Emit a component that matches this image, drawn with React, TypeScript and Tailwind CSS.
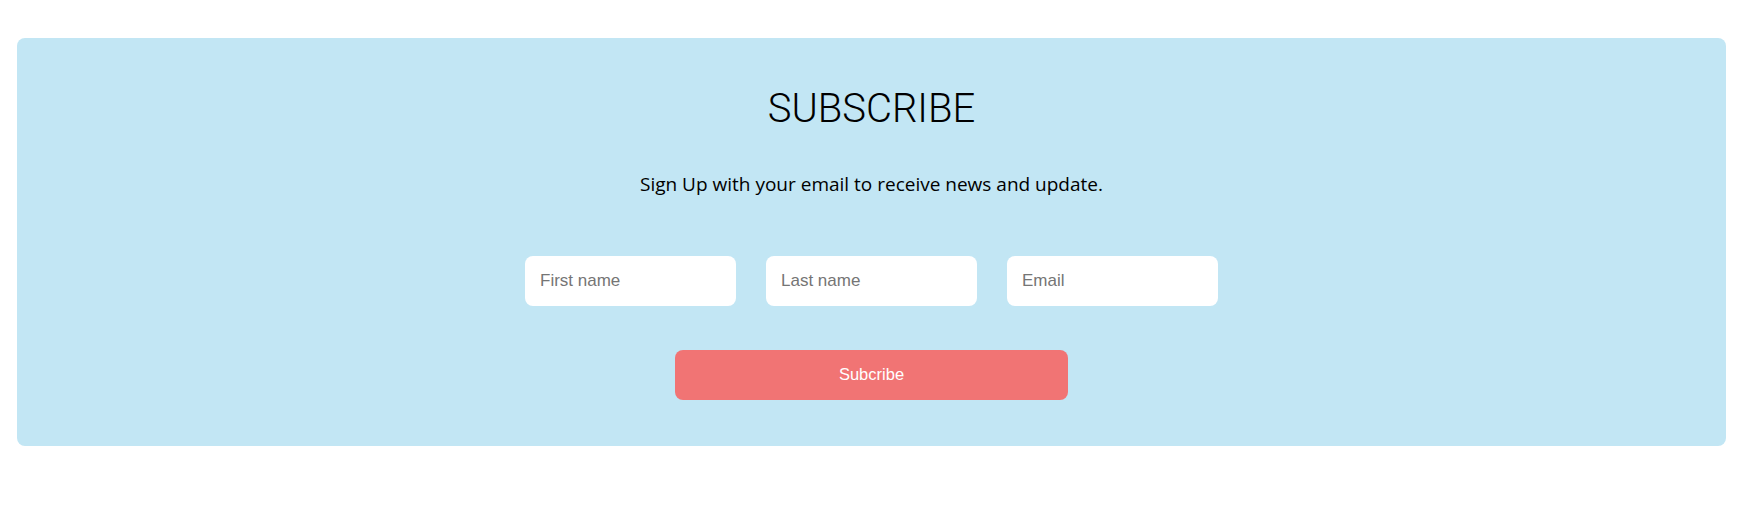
export default function App() {
  return (
    <div className="min-h-screen bg-white pt-[38px] pl-[17px]">
      <div className="w-[1709px] h-[408px] bg-[#c2e6f4] rounded-[8px] flex flex-col items-center pt-[51px]">
        <h2 className="font-['Roboto',sans-serif] font-light text-[40px] leading-none text-black">
          SUBSCRIBE
        </h2>
        <p className="mt-[46px] font-['Open_Sans',sans-serif] text-[19px] leading-none text-black">
          Sign Up with your email to receive news and update.
        </p>
        <form className="mt-[62px] flex gap-[30px]" onSubmit={(e) => e.preventDefault()}>
          <input
            type="text"
            placeholder="First name"
            className="w-[211px] h-[50px] rounded-[8px] bg-white px-[15px] font-['Liberation_Sans',Arial,sans-serif] text-[17px] text-black placeholder:text-[#757575] outline-none"
          />
          <input
            type="text"
            placeholder="Last name"
            className="w-[211px] h-[50px] rounded-[8px] bg-white px-[15px] font-['Liberation_Sans',Arial,sans-serif] text-[17px] text-black placeholder:text-[#757575] outline-none"
          />
          <input
            type="email"
            placeholder="Email"
            className="w-[211px] h-[50px] rounded-[8px] bg-white px-[15px] font-['Liberation_Sans',Arial,sans-serif] text-[17px] text-black placeholder:text-[#757575] outline-none"
          />
        </form>
        <button
          type="button"
          className="mt-[44px] w-[393px] h-[50px] rounded-[8px] bg-[#f17474] pb-[2px] text-white font-['Liberation_Sans',Arial,sans-serif] text-[16.5px]"
        >
          Subcribe
        </button>
      </div>
    </div>
  );
}
